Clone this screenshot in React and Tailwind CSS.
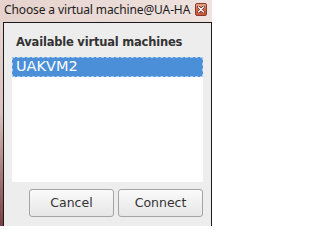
import React from 'react';

function CloseButton() {
    return (
        <div className="w-[12px] h-[13px] mt-[3px] rounded-[2px] border border-[#8a3a2a] bg-gradient-to-b from-[#e8a48c] via-[#d46a4e] to-[#c8553a] flex items-center justify-center">
            <svg width="8" height="7" viewBox="0 0 8 7">
                <path d="M1.5 1 L6.5 6 M6.5 1 L1.5 6" stroke="#5a2418" strokeWidth="2.6" strokeLinecap="round" />
                <path d="M1.5 1 L6.5 6 M6.5 1 L1.5 6" stroke="#ffffff" strokeWidth="1.4" strokeLinecap="round" />
            </svg>
        </div>
    );
}

function MachineList({ machines, selected }) {
    return (
        <div className="mx-[8px] h-[125px] bg-white">
            {machines.map((name) => (
                <div
                    key={name}
                    className={name === selected
                        ? "h-[20px] mt-[1px] bg-[#4a8fd8] border border-dashed border-[#a9cdf2] text-white pl-[3px] flex items-center"
                        : "h-[20px] pl-[4px] flex items-center text-[#222]"}
                >
                    {name}
                </div>
            ))}
        </div>
    );
}

export default function App() {
    const machines = ['UAKVM2'];

    return (
        <div className="w-[212px] h-[226px] overflow-hidden flex flex-col bg-gradient-to-b from-[#ead9d5] via-[#d9c2c0] to-[#7a3f42]">
            <div className="h-[22px] shrink-0 flex justify-between pl-[4px] pr-[5px] bg-gradient-to-r from-[#e6d2cd] to-[#efe3df]">
                <span className="text-[12px] leading-[19px] text-[#1b1b1b]" style={{ fontFamily: '"Noto Sans", sans-serif', letterSpacing: '-0.12px' }}>
                    Choose a virtual machine@UA-HA
                </span>
                <CloseButton />
            </div>

            <div className="flex-1 ml-[3px] border-l border-t border-r border-[#1a1a1a] bg-[#ededed] flex flex-col" style={{ fontFamily: '"DejaVu Sans", sans-serif' }}>
                <div className="h-[33px] pl-[12px] pt-[12px] text-[11.5px] font-bold text-[#333] leading-[14px] tracking-[-0.2px]">
                    Available virtual machines
                </div>

                <div className="text-[14.5px]">
                    <MachineList machines={machines} selected="UAKVM2" />
                </div>

                <div className="flex justify-end gap-[4px] pr-[8px] pt-[7px]">
                    <button className="w-[85px] h-[28px] rounded-[3px] border border-[#a4a4a4] bg-gradient-to-b from-[#fafafa] to-[#e6e6e6] text-[12.5px] text-[#333]">
                        Cancel
                    </button>
                    <button className="w-[85px] h-[28px] rounded-[3px] border border-[#a4a4a4] bg-gradient-to-b from-[#fafafa] to-[#e6e6e6] text-[12.5px] text-[#333]">
                        Connect
                    </button>
                </div>
            </div>
        </div>
    );
}
